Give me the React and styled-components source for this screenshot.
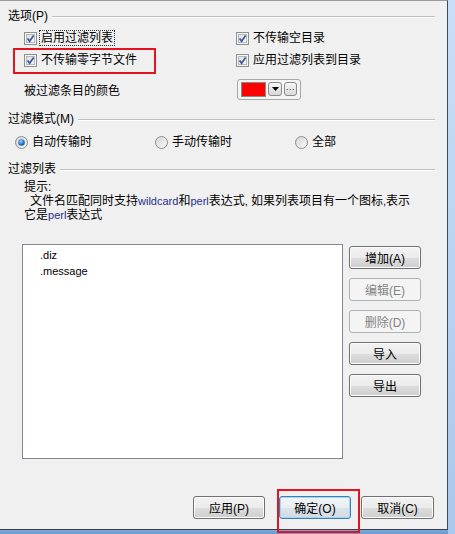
import React from "react";
import styled, { createGlobalStyle } from "styled-components";

const GlobalStyle = createGlobalStyle`
  body {
    margin: 0;
    font-family: "Liberation Sans", "Noto Sans CJK SC", sans-serif;
    font-size: 12px;
    color: #000;
  }
`;

const Frame = styled.div`
  position: relative;
  width: 455px;
  height: 534px;
  background: linear-gradient(180deg, #c9defa 0%, #a9c8ee 100%);
  overflow: hidden;
`;

const Panel = styled.div`
  box-sizing: border-box;
  width: 448px;
  height: 530px;
  background: #f0f0f0;
  border-top: 1px solid #9c9c9c;
  border-right: 1px solid #3f4a55;
  border-bottom: 1px solid #37414c;
  padding: 7px 12px 10px 8px;
  display: flex;
  flex-direction: column;
`;

const BottomStrip = styled.div`
  position: absolute;
  left: 0;
  bottom: 0;
  width: 448px;
  height: 4px;
  background: linear-gradient(180deg, #7fa7d8 0%, #6d97cf 100%);
`;

const GroupHeader = styled.div`
  display: flex;
  align-items: center;
  height: 16px;
  gap: 4px;
  margin-top: ${(p) => p.$top || 0}px;
`;

const GroupTitle = styled.span`
  white-space: nowrap;
  line-height: 16px;
`;

const Rule = styled.div`
  flex: 1;
  height: 0;
  border-top: 1px solid #c0c0c0;
  border-bottom: 1px solid #ffffff;
  margin-top: 1px;
`;

const OptionGrid = styled.div`
  display: grid;
  grid-template-columns: 212px 1fr;
  grid-auto-rows: 22px;
  padding-left: 16px;
  margin-top: 3px;
`;

const ColorRow = styled.div`
  display: grid;
  grid-template-columns: 213px 1fr;
  align-items: center;
  height: 22px;
  padding-left: 16px;
  margin-top: 7px;
`;

const Row = styled.label`
  display: flex;
  align-items: center;
  gap: 3px;
  white-space: nowrap;
`;

const Caption = styled.span`
  line-height: 14px;
  padding: 0 1px;
  outline: ${(p) => (p.$focused ? "1px dotted #333" : "none")};
  outline-offset: 0;
`;

const PlainText = styled.span`
  white-space: nowrap;
`;

const Checkbox = () => (
  <svg width="13" height="13" viewBox="0 0 13 13">
    <defs>
      <linearGradient id="cbg" x1="0" y1="0" x2="1" y2="1">
        <stop offset="0" stopColor="#dcdcdc" />
        <stop offset="1" stopColor="#fbfbfb" />
      </linearGradient>
    </defs>
    <rect x="0.5" y="0.5" width="12" height="12" fill="#f6f6f6" stroke="#8e8f8f" />
    <rect x="2.5" y="2.5" width="8" height="8" fill="url(#cbg)" stroke="#b5b8bd" />
    <path d="M3.6 6.4 L5.6 9.2 L9.6 3.4" fill="none" stroke="#3b56a3" strokeWidth="1.7" />
  </svg>
);

const ColorPicker = styled.div`
  display: flex;
  align-items: center;
  gap: 2px;
  width: 64px;
  height: 21px;
  box-sizing: border-box;
  padding: 0 3px;
  border: 1px solid #a7a7a7;
  border-radius: 3px;
  background: #f4f4f4;
`;

const Swatch = styled.div`
  width: 25px;
  height: 13px;
  background: #ff0000;
  border: 1px solid #8a8a8a;
`;

const MiniButton = styled.div`
  width: 14px;
  height: 14px;
  box-sizing: border-box;
  border: 1px solid #8a8a8a;
  border-radius: 3px;
  background: linear-gradient(180deg, #f7f7f7 0%, #e6e6e6 50%, #d9d9d9 100%);
  display: flex;
  align-items: center;
  justify-content: center;
  font-size: 9px;
  line-height: 9px;
  color: #333;
`;

const RadioRow = styled.div`
  display: grid;
  grid-template-columns: 140px 140px 1fr;
  align-items: center;
  height: 22px;
  padding-left: 7px;
  margin-top: 4px;
`;

const Radio = ({ checked }) => (
  <svg width="13" height="13" viewBox="0 0 13 13">
    <defs>
      <linearGradient id="rbg" x1="0" y1="0" x2="1" y2="1">
        <stop offset="0" stopColor="#d2d2d2" />
        <stop offset="1" stopColor="#fcfcfc" />
      </linearGradient>
      <radialGradient id="rdot" cx="0.4" cy="0.35" r="0.7">
        <stop offset="0" stopColor="#9fd2ff" />
        <stop offset="0.6" stopColor="#2a78c8" />
        <stop offset="1" stopColor="#0f4e98" />
      </radialGradient>
    </defs>
    <circle cx="6.5" cy="6.5" r="6" fill="url(#rbg)" stroke="#8e8f8f" />
    {checked && <circle cx="6.5" cy="6.5" r="3.3" fill="url(#rdot)" />}
  </svg>
);

const Hint = styled.div`
  padding-left: 16px;
  margin-top: 3px;
  line-height: 14px;
  white-space: nowrap;
`;

const HintLine = styled.div`
  padding-left: ${(p) => p.$indent || 0}px;
`;

const Latin = styled.span`
  font-size: 11px;
  color: ${(p) => (p.$blue ? "#1f2f8f" : "inherit")};
`;

const ListArea = styled.div`
  display: flex;
  align-items: flex-start;
  gap: 6px;
  padding-left: 14px;
  margin-top: 22px;
`;

const ListBox = styled.div`
  box-sizing: border-box;
  width: 321px;
  height: 215px;
  background: #fff;
  border: 1px solid #828790;
  padding: 2px 0 0 17px;
`;

const ListItem = styled.div`
  height: 16px;
  line-height: 16px;
  font-size: 11px;
`;

const ButtonColumn = styled.div`
  display: flex;
  flex-direction: column;
  gap: 9px;
  margin-top: 2px;
`;

const Button = styled.button`
  box-sizing: border-box;
  width: ${(p) => p.$w || 72}px;
  height: 23px;
  padding: 0;
  font-family: inherit;
  font-size: 12px;
  border-radius: 3px;
  border: 1px solid ${(p) => (p.disabled ? "#adb2b5" : p.$focused ? "#3c7fb1" : "#707070")};
  color: ${(p) => (p.disabled ? "#838383" : "#000")};
  background: ${(p) =>
    p.disabled
      ? "#f4f4f4"
      : p.$focused
      ? "linear-gradient(180deg, #f1f5f8 0%, #e9eef2 50%, #dce3e9 51%, #d2dbe2 100%)"
      : "linear-gradient(180deg, #f2f2f2 0%, #ebebeb 50%, #dddddd 51%, #cfcfcf 100%)"};
  box-shadow: ${(p) =>
    p.$focused ? "inset 0 0 0 1px #9fd6f4" : p.disabled ? "none" : "inset 0 0 0 1px #fcfcfc"};
`;

const Footer = styled.div`
  display: flex;
  justify-content: flex-end;
  gap: 10px;
  margin-top: auto;
  padding-right: 1px;
`;

const ApplyButton = styled(Button)`
  margin-right: 4px;
`;

const Highlight = styled.div`
  position: absolute;
  box-sizing: border-box;
  left: ${(p) => p.$x}px;
  top: ${(p) => p.$y}px;
  width: ${(p) => p.$w}px;
  height: ${(p) => p.$h}px;
  border: 2px solid #e3141f;
  pointer-events: none;
`;

const App = () => {
  return (
    <>
      <GlobalStyle />
      <Frame>
        <Panel>
          <GroupHeader>
            <GroupTitle>选项(P)</GroupTitle>
            <Rule />
          </GroupHeader>
          <OptionGrid>
            <Row>
              <Checkbox />
              <Caption $focused>启用过滤列表</Caption>
            </Row>
            <Row>
              <Checkbox />
              <Caption>不传输空目录</Caption>
            </Row>
            <Row>
              <Checkbox />
              <Caption>不传输零字节文件</Caption>
            </Row>
            <Row>
              <Checkbox />
              <Caption>应用过滤列表到目录</Caption>
            </Row>
          </OptionGrid>
          <ColorRow>
            <PlainText>被过滤条目的颜色</PlainText>
            <ColorPicker>
              <Swatch />
              <MiniButton>
                <svg width="7" height="4" viewBox="0 0 7 4">
                  <path d="M0 0 H7 L3.5 4 Z" fill="#000" />
                </svg>
              </MiniButton>
              <MiniButton>···</MiniButton>
            </ColorPicker>
          </ColorRow>

          <GroupHeader $top={11}>
            <GroupTitle>过滤模式(M)</GroupTitle>
            <Rule />
          </GroupHeader>
          <RadioRow>
            <Row>
              <Radio checked />
              <Caption>自动传输时</Caption>
            </Row>
            <Row>
              <Radio />
              <Caption>手动传输时</Caption>
            </Row>
            <Row>
              <Radio />
              <Caption>全部</Caption>
            </Row>
          </RadioRow>

          <GroupHeader $top={8}>
            <GroupTitle>过滤列表</GroupTitle>
            <Rule />
          </GroupHeader>
          <Hint>
            <HintLine>提示:</HintLine>
            <HintLine $indent={6}>
              文件名匹配同时支持<Latin $blue>wildcard</Latin>和<Latin $blue>perl</Latin>表达式
              <Latin>, </Latin>如果列表项目有一个图标<Latin>,</Latin>表示
            </HintLine>
            <HintLine>
              它是<Latin $blue>perl</Latin>表达式
            </HintLine>
          </Hint>

          <ListArea>
            <ListBox>
              <ListItem>.diz</ListItem>
              <ListItem>.message</ListItem>
            </ListBox>
            <ButtonColumn>
              <Button>增加(A)</Button>
              <Button disabled>编辑(E)</Button>
              <Button disabled>删除(D)</Button>
              <Button>导入</Button>
              <Button>导出</Button>
            </ButtonColumn>
          </ListArea>

          <Footer>
            <ApplyButton $w={72}>应用(P)</ApplyButton>
            <Button $w={72} $focused>确定(O)</Button>
            <Button $w={73}>取消(C)</Button>
          </Footer>
        </Panel>
        <BottomStrip />
        <Highlight $x={13} $y={48} $w={143} $h={26} />
        <Highlight $x={277} $y={489} $w={83} $h={44} />
      </Frame>
    </>
  );
};

export default App;
